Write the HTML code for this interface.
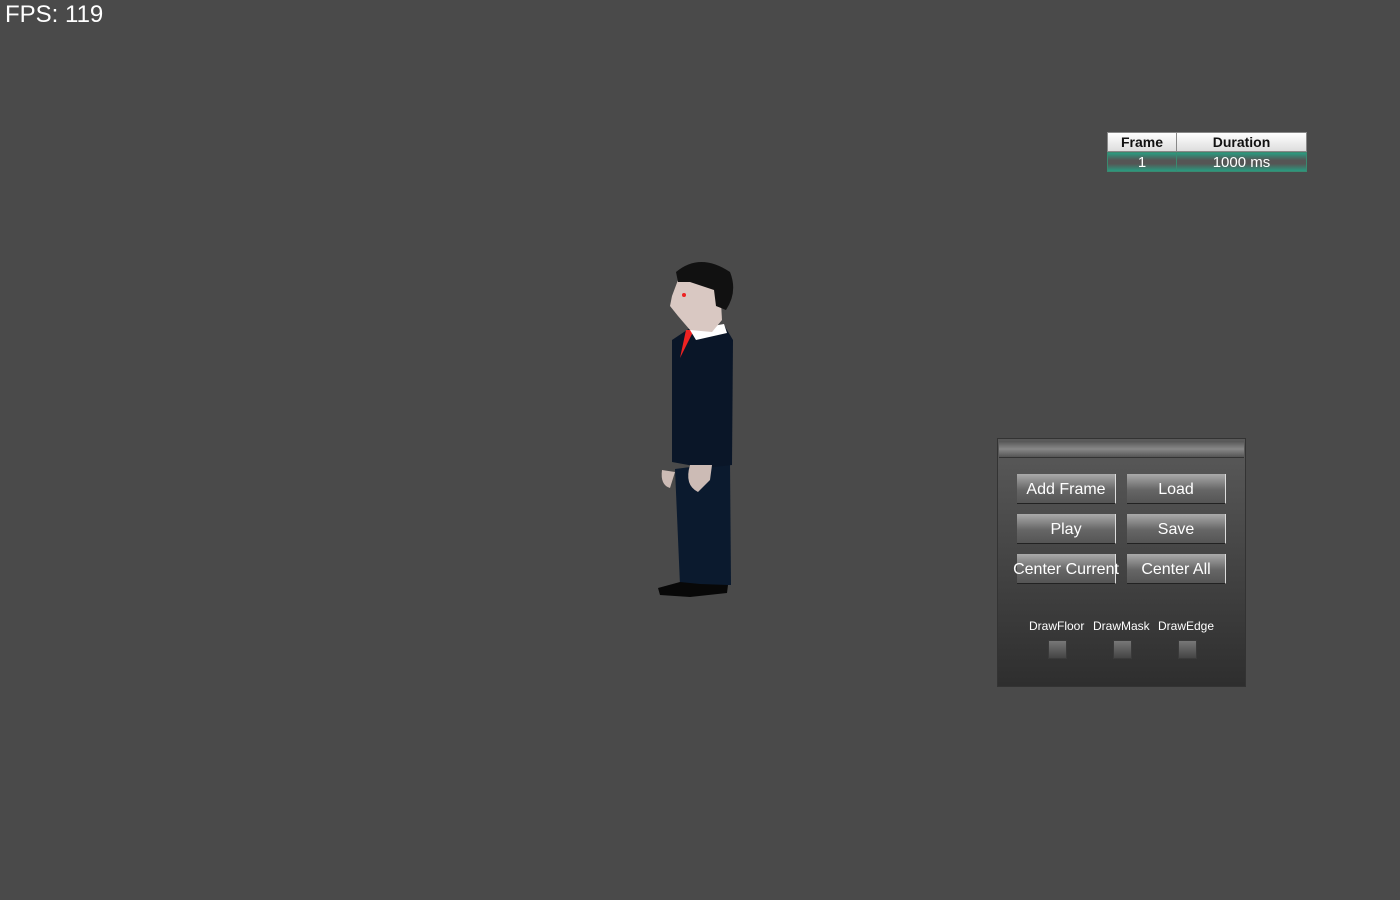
<!DOCTYPE html>
<html><head><style>
body{margin:0;width:1400px;height:900px;background:#4a4a4a;position:relative;overflow:hidden;font-family:"Liberation Sans",sans-serif}
.fps{position:absolute;left:5px;top:1px;color:#fff;font-size:24px}
.t{position:absolute;box-sizing:border-box;text-align:center}
.h{background:linear-gradient(#fff,#ddd);color:#111;font-size:14px;font-weight:bold;line-height:18px;border:1px solid #888}
.r{background:linear-gradient(#2a9a80,#555 40%,#555 60%,#2a9a80);color:#fff;font-size:15px;line-height:19px;border:1px solid #3a8a70}
.panel{position:absolute;left:997px;top:438px;width:249px;height:249px;box-sizing:border-box;border:1px solid #333;background:linear-gradient(#5a5a5a,#2e2e2e)}
.bar{position:absolute;left:1px;top:2px;width:245px;height:16px;background:linear-gradient(#555,#888 50%,#555);border-bottom:1px solid #333}
.b{position:absolute;width:99px;height:30px;box-sizing:border-box;background:linear-gradient(#aaa,#666 55%,#555);border-right:1px solid #ddd;border-bottom:1px solid #222;color:#fff;font-size:16px;line-height:32px;display:flex;justify-content:center;white-space:nowrap}
.l{position:absolute;color:#fff;font-size:12px;top:180px}
.c{position:absolute;top:201px;width:17px;height:17px;background:linear-gradient(#777,#444);border:1px solid #3a3a3a}
</style></head><body>
<div class="fps">FPS: 119</div>
<div class="t h" style="left:1107px;top:132px;width:70px;height:20px">Frame</div>
<div class="t h" style="left:1176px;top:132px;width:131px;height:20px">Duration</div>
<div class="t r" style="left:1107px;top:152px;width:70px;height:20px">1</div>
<div class="t r" style="left:1176px;top:152px;width:131px;height:20px">1000 ms</div>
<svg style="position:absolute;left:640px;top:250px" width="120" height="360">
<path d="M675 469 L730 462 L731 585 L680 585 Z" transform="translate(-640,-250)" fill="#0b1a2e"/>
<path d="M672 340 L690 328 L724 325 L733 340 L732 465 L705 468 L672 462 Z" transform="translate(-640,-250)" fill="#0a1628"/>
<path d="M686 330 L680 358 L694 330 Z" transform="translate(-640,-250)" fill="#e22"/>
<path d="M690 330 L724 324 L727 333 L696 340 Z" transform="translate(-640,-250)" fill="#fff"/>
<path d="M678 280 L672 296 L670 306 L678 316 L690 330 L712 332 L722 320 L720 285 Z" transform="translate(-640,-250)" fill="#d9c8c2"/>
<path d="M676 272 Q700 252 730 272 Q738 292 726 310 L716 306 L714 290 L690 282 L678 282 Z" transform="translate(-640,-250)" fill="#111"/>
<circle cx="44" cy="45" r="2" fill="#e22"/>
<path d="M662 470 Q660 485 670 488 L675 472 Z M690 465 Q684 485 698 492 L710 480 L712 465 Z" transform="translate(-640,-250)" fill="#ccbbb5"/>
<path d="M658 588 L680 582 L700 584 L728 585 L727 593 L690 597 L660 595 Z" transform="translate(-640,-250)" fill="#080808"/>
</svg>
<div class="panel">
<div class="bar"></div>
<div class="b" style="left:19px;top:35px"><span>Add Frame</span></div>
<div class="b" style="left:129px;top:35px"><span>Load</span></div>
<div class="b" style="left:19px;top:75px"><span>Play</span></div>
<div class="b" style="left:129px;top:75px"><span>Save</span></div>
<div class="b" style="left:19px;top:115px"><span>Center Current</span></div>
<div class="b" style="left:129px;top:115px"><span>Center All</span></div>
<div class="l" style="left:31px">DrawFloor</div>
<div class="l" style="left:95px">DrawMask</div>
<div class="l" style="left:160px">DrawEdge</div>
<div class="c" style="left:50px"></div>
<div class="c" style="left:115px"></div>
<div class="c" style="left:180px"></div>
</div>
</body></html>
